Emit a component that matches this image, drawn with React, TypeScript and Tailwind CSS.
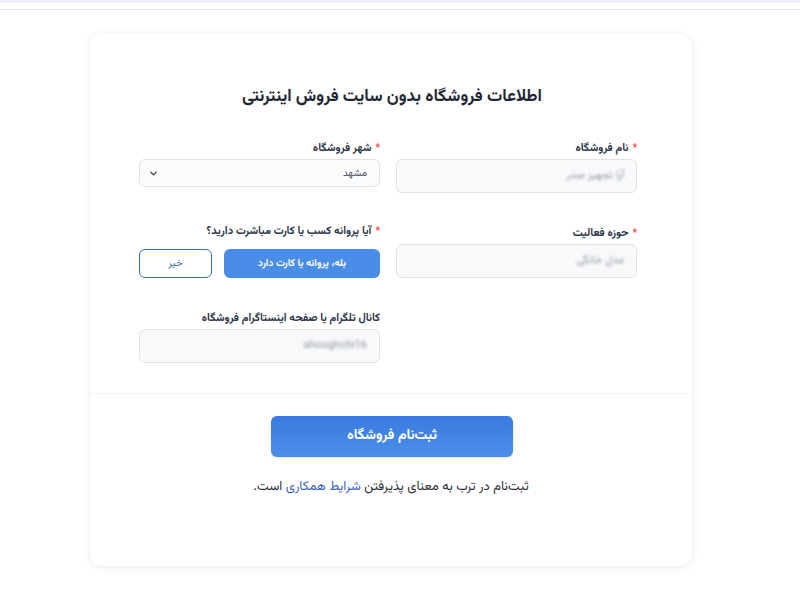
import { ChevronDown } from "lucide-react"

const font = { fontFamily: '"Vazirmatn", "DejaVu Sans", "Noto Sans", sans-serif' }

function Label({ text, required = true }: { text: string; required?: boolean }) {
  return (
    <div className="flex items-center gap-1 text-[11px] font-bold leading-[14px] text-[#2d3748]">
      {required && <span className="text-[10px] text-[#ef4444]">*</span>}
      <span>{text}</span>
    </div>
  )
}

function BlurInput({ value }: { value: string }) {
  return (
    <div className="mt-[3px] flex h-[34px] items-center rounded-[6px] border border-[#dfe2e7] bg-[#f8f9fb] px-3">
      <span className="text-[11px] text-[#8f959e] blur-[1.4px]">{value}</span>
    </div>
  )
}

export default function App() {
  return (
    <div dir="rtl" className="min-h-[600px] w-[800px] bg-white" style={font}>
      {/* top strip */}
      <div className="h-[3px] bg-[#eceffb]" />
      <div className="h-[7px] border-b border-[#e6e7ea] bg-white" />

      <div className="mr-[108px] mt-[24px] w-[602px] rounded-[12px] bg-white shadow-[0_1px_8px_rgba(0,0,0,0.09)]">
        <h1 className="pt-[53px] pl-[2px] text-center text-[17px] font-bold leading-[20px] text-[#1f2733]">
          اطلاعات فروشگاه بدون سایت فروش اینترنتی
        </h1>

        <div className="grid grid-cols-2 auto-rows-[53px] gap-x-4 gap-y-8 pb-[28px] pl-[49px] pr-[55px] pt-[35px]">
          {/* row 1 */}
          <div>
            <Label text="نام فروشگاه" />
            <BlurInput value="آرا تجهیز صدر" />
          </div>
          <div>
            <Label text="شهر فروشگاه" />
            <div className="mt-[3px] flex h-[28px] items-center justify-between rounded-[6px] border border-[#dfe2e7] bg-[#fafbfc] px-3">
              <span className="text-[10px] text-[#4a5160]">مشهد</span>
              <ChevronDown size={11} strokeWidth={2.5} className="ml-[-4px] text-[#333]" />
            </div>
          </div>

          {/* row 2 */}
          <div>
            <Label text="حوزه فعالیت" />
            <BlurInput value="مدل خانگی" />
          </div>
          <div>
            <div className="-mt-[2px]">
              <Label text="آیا پروانه کسب یا کارت مباشرت دارید؟" />
            </div>
            <div className="mt-[10px] flex gap-3">
              <button className="h-[29px] flex-1 rounded-[6px] bg-[#4a8de6] text-[10px] font-bold text-white">
                بله، پروانه یا کارت دارد
              </button>
              <button className="h-[29px] w-[73px] rounded-[6px] border border-[#3c6fae] bg-white text-[10px] text-[#3c6fae]">
                خیر
              </button>
            </div>
          </div>

          {/* row 3 */}
          <div />
          <div>
            <Label text="کانال تلگرام یا صفحه اینستاگرام فروشگاه" required={false} />
            <BlurInput value="ahooghchi16" />
          </div>
        </div>

        <div className="flex flex-col items-center border-t border-[#f3f4f6] pb-[70px] pt-[22px]">
          <button className="mr-[-2px] h-[41px] w-[242px] rounded-[6px] bg-gradient-to-b from-[#3a7ae0] to-[#4b8fe9] text-[14px] font-bold text-white shadow-[0_1px_3px_rgba(0,0,0,0.12)]">
            ثبت‌نام فروشگاه
          </button>
          <p className="mt-[21px] text-[13px] leading-[18px] text-[#2b2f36]">
            ثبت‌نام در ترب به معنای پذیرفتن <span className="text-[#3d63b8]">شرایط همکاری</span> است.
          </p>
        </div>
      </div>
    </div>
  )
}
